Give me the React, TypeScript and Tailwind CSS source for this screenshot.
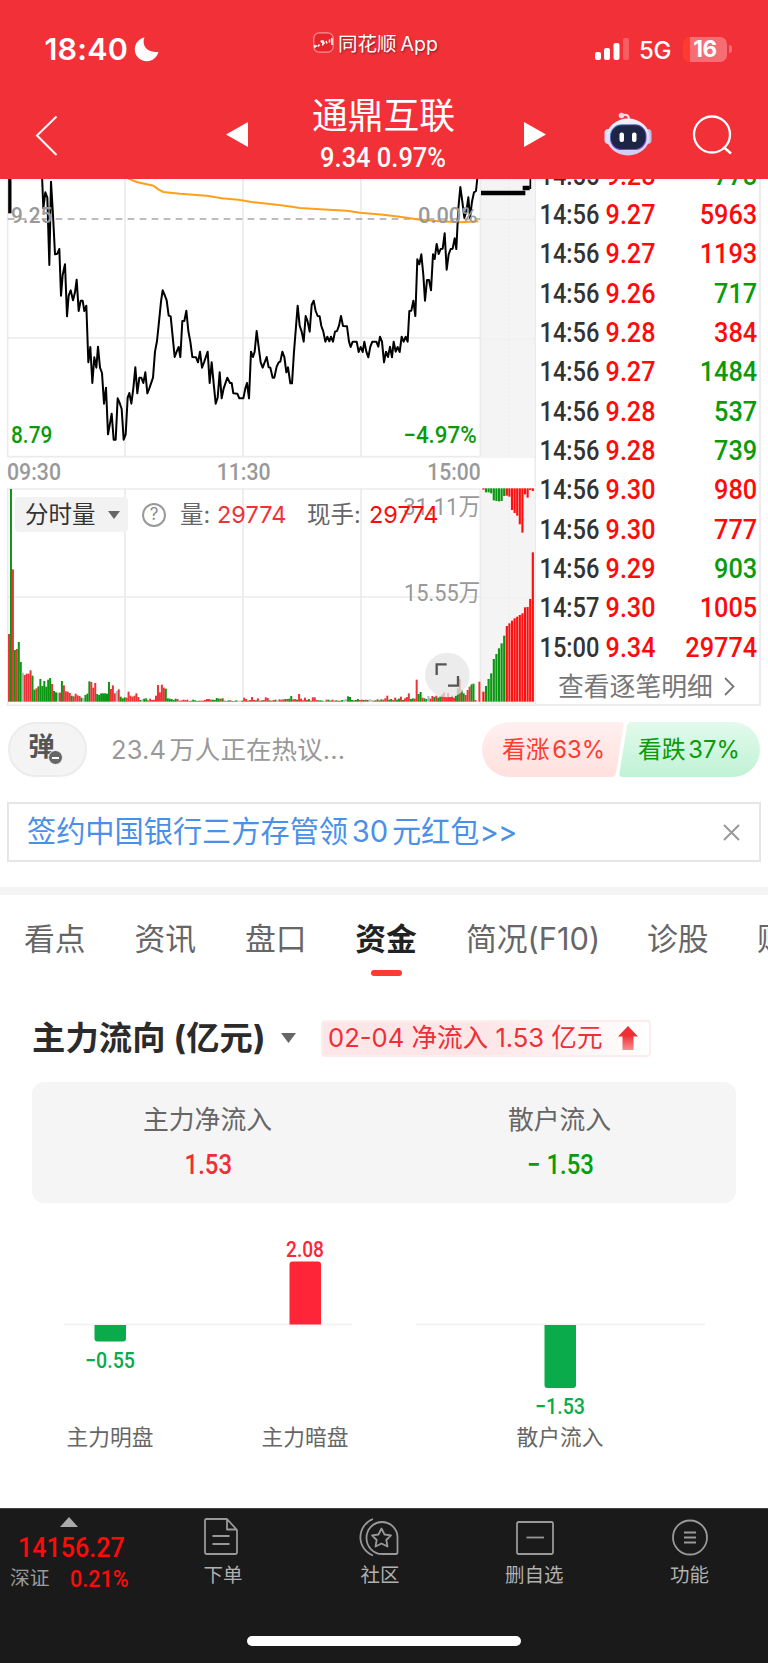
import { ReactNode } from "react";
import clsx from "clsx";

const UI = "font-['Inter','Noto_Sans_CJK_SC',sans-serif]";
const NUM = "font-['Roboto','Noto_Sans_CJK_SC',sans-serif]";

type Tone = "r" | "g" | "x";

const toneFill: Record<Tone, string> = { r: "#ee3238", g: "#0a9610", x: "#b5b5b5" };

// Chart coordinates are in thirds of a pixel
const pricePath =
  "126,0 130,100 136,52 142,68 148,270 153,20 159,120 165,238 172,236 178,222 183,362 188,300 195,268 201,424 206,362 212,346 219,376 225,352 230,314 236,408 242,377 248,377 253,408 259,392 265,562 271,516 277,624 283,547 289,578 294,515 300,578 306,594 312,686 318,638 324,778 330,745 335,716 341,794 347,794 353,670 359,684 365,702 371,794 377,778 383,668 388,654 394,686 400,640 406,577 412,655 418,608 424,608 430,624 436,592 442,655 448,640 459,608 465,530 471,498 477,440 483,380 488,346 494,360 500,376 506,422 512,424 518,485 524,546 530,530 536,516 541,546 547,438 553,438 559,407 565,468 571,500 577,546 588,547 594,562 600,530 606,578 612,562 623,530 629,624 635,562 641,625 647,686 653,668 659,592 665,670 671,640 682,608 690,624 695,624 700,655 712,656 718,670 730,670 736,640 741,624 747,670 753,530 759,546 764,530 770,468 776,516 782,562 788,578 800,546 806,577 811,578 818,608 823,608 830,575 836,562 841,560 847,530 853,546 859,592 864,577 871,625 876,625 882,530 888,455 893,392 899,452 905,470 911,500 917,423 923,440 929,470 935,390 941,377 947,408 953,423 959,424 964,453 970,470 976,500 982,485 988,499 993,485 999,500 1005,470 1011,468 1017,452 1023,423 1029,453 1041,454 1047,500 1052,516 1058,500 1070,500 1076,531 1082,516 1088,531 1093,500 1099,530 1105,547 1111,515 1117,500 1129,500 1135,515 1140,485 1146,500 1152,562 1158,530 1164,546 1170,515 1176,547 1181,500 1187,530 1193,516 1199,531 1205,485 1211,500 1217,485 1223,500 1228,408 1234,407 1240,377 1246,423 1252,253 1258,268 1264,238 1270,300 1275,377 1281,315 1287,315 1293,346 1299,238 1304,252 1310,207 1316,237 1322,222 1328,221 1334,175 1340,284 1346,238 1352,222 1358,221 1364,190 1369,222 1375,100 1381,36 1387,80 1393,128 1399,110 1405,67 1410,128 1416,80 1422,52 1428,48 1433,0";

const avgPath =
  "380,8 388,12 410,21 460,32 475,43 490,51 540,56 620,62 665,70 715,74 755,81 810,87 860,93 900,99 960,103 1040,107 1080,113 1150,119 1210,127 1260,134 1320,139 1380,142 1435,139";

// one bar per minute
const volume =
  "r203 g638 r397 g155 r158 g179 g119 x87 r80 r84 r84 r94 g78 g36 r40 g46 g68 g47 g62 g45 g66 g71 r53 g32 g28 x27 r27 g62 r49 r31 r30 r26 g18 r16 r24 r19 r17 g12 x10 g20 g24 g61 r59 r42 r56 g23 g20 g25 g25 g25 g24 g59 r38 r49 r25 x32 r37 g15 g10 g13 r12 r30 r18 r15 r18 r25 r14 g5 x7 g9 g10 r4 r9 r5 r6 r18 r50 r28 r51 r42 g39 g10 g9 g8 g5 g9 r8 r3 r4 r6 r5 r6 r2 r3 g6 g4 g2 g3 r3 r3 r5 r8 r8 r6 g6 g5 g11 g9 r9 g10 r3 r2 g4 r4 g2 r2 g4 x3 x3 g3 r12 r8 g3 r5 r14 r5 g4 r10 r3 g4 r5 r13 r11 g4 r3 r5 g6 x4 r7 r6 r7 g8 r8 g9 g17 r7 r8 g6 r23 r9 r4 r12 r5 g8 r3 r13 r13 r5 g4 g4 g3 x2 r6 g6 g3 r6 r3 g4 r3 g3 g5 x6 x7 g16 g14 g5 r4 g5 g8 r5 r6 g5 r6 g5 x7 x5 r3 g4 r7 g4 g7 r6 r10 r18 g6 g8 r5 r12 g6 g9 r15 g5 r10 r14 r25 g8 g10 r9 r66 g23 g29 r12 g10 g8 x17 r9 r17 g14 r18 g12 g15 r22 r28 r14 r26 r14 r18 r12 g18 g40 r68 g35 g25 r20 r35 r45 g52 g54 r5 x1 r60"
    .split(" ")
    .map((s) => ({ tone: s[0] as Tone, h: Number(s.slice(1)) }));

const lateVolume = [30, 47, 68, 85, 128, 143, 160, 175, 198, 227, 235, 243, 250, 255, 260, 265, 283, 284, 308, 448];
const lateCancel = [4, 12, 12, 15, 36, 38, 39, 38, 23, 22, 25, 65, 74, 82, 108, 133, 18, 28, 5, 8];

const ticks: [string, string, string, boolean][] = [
  ["14:55", "9.28", "778", false],
  ["14:56", "9.27", "5963", true],
  ["14:56", "9.27", "1193", true],
  ["14:56", "9.26", "717", false],
  ["14:56", "9.28", "384", true],
  ["14:56", "9.27", "1484", false],
  ["14:56", "9.28", "537", false],
  ["14:56", "9.28", "739", false],
  ["14:56", "9.30", "980", true],
  ["14:56", "9.30", "777", true],
  ["14:56", "9.29", "903", false],
  ["14:57", "9.30", "1005", true],
  ["15:00", "9.34", "29774", true],
];

function StatusBar() {
  return (
    <div className="flex h-[94px] items-center">
      <span className="ml-[44.500px] mt-[4px] w-[89.500px] text-[30.500px] font-semibold leading-[36px] tracking-[0.2px]">18:40</span>
      <svg className="mt-[4px] h-[25px] w-[26px]" viewBox="0 0 26 25" fill="#fff">
        <path d="M10.5 0.3C7.5 7.5 12 16.5 24.5 14.8C23 20.5 18.5 24.2 13 24.2C6 24.2 0.8 19 0.8 12.5C0.8 6.5 4.8 1.8 10.5 0.3Z" />
      </svg>
      <svg className="ml-[153px] mt-[-9px] h-[21px] w-[21px]" viewBox="0 0 21 21" fill="none">
        <rect x="0.8" y="0.8" width="19.4" height="19.4" rx="5.5" fill="#e8242b" stroke="#f79296" strokeWidth="1.2" />
        <path d="M1.500 13l.5 2 2-1.500M5 14.500l1.500-2M7.500 9.500l1.500-.5v2M9.500 13.500l1-3.500 .8 2M13 9l1 2.500M16.500 7.500v3M18 6.500l1 .5v6" stroke="#fff" strokeWidth="1.500" />
      </svg>
      <span className="ml-[4px] mt-[-6px] w-[101px] whitespace-nowrap text-[19.5px] leading-[26px] [word-spacing:-1.500px] [text-shadow:1px_1px_2px_rgba(0,0,0,0.45)]">
        同花顺 App
      </span>
      <svg className="ml-[156px] mt-[4px] h-[24px] w-[35px]" viewBox="0 0 35 24" fill="#fff">
        <rect x="0" y="15" width="6" height="8" rx="2" />
        <rect x="9" y="11" width="6" height="12" rx="2" />
        <rect x="18.500" y="6" width="6" height="17" rx="2" />
        <rect x="28" y="1" width="6" height="22" rx="2" opacity="0.22" />
      </svg>
      <span className="ml-[9px] mt-[7px] w-[35px] text-[24px] font-medium leading-[28px] tracking-[-0.3px]">5G</span>
      <div className="ml-[9px] mt-[4px] flex h-[25px] w-[44px] shrink-0 items-center justify-center rounded-[7px] bg-linear-to-r from-[#ff3b30] from-[16%] to-[#f66e73] to-[16%] text-[22.500px] font-bold tracking-[-0.3px]">
        16
      </div>
      <div className="ml-[2px] mt-[4px] h-[8px] w-[2.5px] rounded-r-full bg-[#f66e73]" />
    </div>
  );
}

function Robot() {
  return (
    <svg className="h-[44px] w-[48px]" viewBox="0 0 48 44" fill="none">
      <defs>
        <linearGradient id="shell" x1="0" y1="0" x2="0" y2="1">
          <stop offset="0" stopColor="#f4f3fb" />
          <stop offset="1" stopColor="#cfcdf0" />
        </linearGradient>
        <linearGradient id="visor" x1="0" y1="0" x2="1" y2="1">
          <stop offset="0" stopColor="#4a9fc0" />
          <stop offset="0.500" stopColor="#5a3fc0" />
          <stop offset="1" stopColor="#8a5ce0" />
        </linearGradient>
      </defs>
      <path d="M18 3.500c4-1.500 7-.5 7 4" stroke="#e3e1f5" strokeWidth="2" />
      <circle cx="17.500" cy="3.500" r="2.800" fill="#f0d8e4" />
      <rect x="0.500" y="17" width="8" height="15" rx="4" fill="#dcd9f5" />
      <rect x="39.500" y="17" width="8" height="15" rx="4" fill="#c3c0ea" />
      <ellipse cx="24" cy="25" rx="21.500" ry="18.500" fill="url(#shell)" />
      <rect x="6" y="12.300" width="36.500" height="25.700" rx="11.500" fill="url(#visor)" />
      <rect x="6.900" y="13.200" width="34.700" height="23.800" rx="11" fill="#1d2547" />
      <rect x="15.500" y="20.500" width="4.500" height="9.500" rx="2" fill="#fff" />
      <rect x="28" y="20.500" width="4.500" height="9.500" rx="2" fill="#fff" />
    </svg>
  );
}

function Header() {
  return (
    <header className="h-[179px] shrink-0 bg-[#f23038] text-white">
      <StatusBar />
      <div className="flex h-[85px] items-start">
        <svg className="ml-[35px] mt-[21px] h-[41px] w-[23px]" viewBox="0 0 23 41" fill="none" stroke="#fff" strokeWidth="2">
          <path d="M21.500 1.500L2 20.500L21.500 40" />
        </svg>
        <svg className="ml-[168px] mt-[28px] h-[25px] w-[22px]" viewBox="0 0 22 25" fill="#fff">
          <path d="M0 12.500L22 0V25Z" />
        </svg>
        <div className="ml-[47.500px] flex w-[176px] flex-col items-center">
          <h1 className="mt-[1px] whitespace-nowrap text-[35.800px] leading-[42px]">通鼎互联</h1>
          <p className={clsx(NUM, "scale-x-[0.925] whitespace-nowrap text-[27.500px] font-medium leading-[41px]")}>9.34 0.97%</p>
        </div>
        <svg className="ml-[52px] mt-[28px] h-[25px] w-[22px]" viewBox="0 0 22 25" fill="#fff">
          <path d="M22 12.500L0 0V25Z" />
        </svg>
        <div className="ml-[58px] mt-[18px]">
          <Robot />
        </div>
        <svg className="ml-[40px] mt-[20px] h-[42px] w-[42px]" viewBox="0 0 42 42" fill="none" stroke="#fff" strokeWidth="2.300">
          <circle cx="20" cy="20.500" r="18" />
          <path d="M31.500 33L39 39.500" strokeWidth="2.500" />
        </svg>
      </div>
    </header>
  );
}

function PriceChart() {
  return (
    <svg className={clsx(NUM, "block h-[308px] w-[536px]")} viewBox="0 12 1608 924" fontWeight="500">
      <rect x="1443" y="12" width="162" height="837" fill="#f4f4f4" />
      <g stroke="#ebebeb" strokeWidth="5">
        <path d="M23 12V845H1441M375 12V845M729 12V845M1083 12V845M1441 12V845M23 489H1441" fill="none" />
        <path d="M1441 133H1605" strokeWidth="3" />
        <path d="M1526 12V845M1441 493H1605" strokeWidth="3" strokeDasharray="6 6" />
        <path d="M1606 12V936" />
      </g>
      <path d="M23 132H1441" stroke="#a6a6a6" strokeWidth="5" strokeDasharray="20 16" />
      <polyline points={avgPath} fill="none" stroke="#ff9f1c" strokeWidth="6" />
      <path d="M29.500 12V115" stroke="#000" strokeWidth="10" />
      <polyline points={pricePath} fill="none" stroke="#000" strokeWidth="6" strokeLinejoin="round" />
      <path d="M1443 54H1576M1568 39H1589" stroke="#000" strokeWidth="14" />
      <path d="M1591 12V42" stroke="#000" strokeWidth="5" />
      <g fill="#999">
        <text x="33" y="144" fontSize="68" textLength="124" lengthAdjust="spacingAndGlyphs">9.25</text>
        <text x="1254" y="144" fontSize="68" textLength="178" lengthAdjust="spacingAndGlyphs">0.00%</text>
        <text x="21" y="914" fontSize="70" textLength="162" lengthAdjust="spacingAndGlyphs">09:30</text>
        <text x="650" y="914" fontSize="70" textLength="162" lengthAdjust="spacingAndGlyphs">11:30</text>
        <text x="1282" y="914" fontSize="70" textLength="160" lengthAdjust="spacingAndGlyphs">15:00</text>
      </g>
      <g fill="#0a9b0a">
        <text x="33" y="803" fontSize="70" textLength="124" lengthAdjust="spacingAndGlyphs">8.79</text>
        <text x="1210" y="803" fontSize="70" textLength="220" lengthAdjust="spacingAndGlyphs">−4.97%</text>
      </g>
    </svg>
  );
}

function VolumeChart() {
  return (
    <div className="relative mt-[1px] h-[218px] w-[536px]">
      <svg className={clsx(NUM, "block h-[218px] w-[536px]")} viewBox="0 24 1608 654">
        <rect x="1443" y="24" width="162" height="650" fill="#f4f4f4" />
        <g stroke="#ebebeb" strokeWidth="5" fill="none">
          <path d="M23 676V27H1441M375 27V676M729 27V676M1083 27V676M1441 27V676M23 351H1441M20 676H1608" />
          <path d="M1526 27V665M1441 353H1605" strokeWidth="3" strokeDasharray="6 6" />
          <path d="M1606 24V676" />
        </g>
        {volume.map((v, i) => (
          <rect key={i} x={24 + i * 5.88} y={665 - v.h} width="6" height={v.h} fill={toneFill[v.tone]} />
        ))}
        {lateVolume.map((h, i) => (
          <rect key={i} x={1447 + i * 7.8} y={665 - h} width="6.500" height={h} fill={i > 0 && i < 9 ? "#0a9610" : "#ff0f0f"} />
        ))}
        {lateCancel.map((h, i) => (
          <rect key={i} x={1447 + i * 7.8} y="25" width="6.500" height={h} fill={i > 0 && i < 9 ? "#0a9610" : "#ff0f0f"} />
        ))}
        <g fill="#999" fontSize="70">
          <text x="1210" y="104" textLength="231" lengthAdjust="spacingAndGlyphs">31.11万</text>
          <text x="1212" y="364" textLength="229" lengthAdjust="spacingAndGlyphs">15.55万</text>
        </g>
        <circle cx="1342" cy="585" r="67" fill="#e6e6e6" opacity="0.750" />
        <path d="M1310 585V553H1340M1374 588V617H1344" fill="none" stroke="#555" strokeWidth="7" />
      </svg>
      <div className="absolute left-[15px] top-[9px] flex h-[35px] items-center whitespace-nowrap text-[23.500px] text-[#666]">
        <div className="flex h-[35px] w-[113px] items-center rounded-[4px] bg-[#f2f2f2] pl-[10px] text-[#333]">
          分时量
          <svg className="ml-[12px] h-[8px] w-[12px]" viewBox="0 0 12 8" fill="#666">
            <path d="M0 0H12L6 8Z" />
          </svg>
        </div>
        <div className="ml-[14px] flex h-[24px] w-[24px] items-center justify-center rounded-full border-2 border-[#999] text-[17px] text-[#888]">?</div>
        <span className="ml-[14px] w-[37px]">量:</span>
        <span className="w-[90px] text-[#ee3238]">29774</span>
        <span className="w-[62px]">现手:</span>
        <span className="text-[#ff0a0a]">29774</span>
      </div>
    </div>
  );
}

function TickList() {
  return (
    <div className="flex h-[527px] w-[225px] flex-col overflow-hidden border-b-2 border-r-2 border-[#ededed]">
      <div className={clsx(NUM, "mt-[-23.500px] text-[27.500px] font-medium")}>
        {ticks.map(([time, price, vol, up], i) => (
          <div key={i} className="flex h-[39.350px] items-center">
            <span className="w-[65px] origin-left scale-x-[0.860] pl-[4px] text-[#333]">{time}</span>
            <span className="w-[60px] origin-left scale-x-[0.915] pl-[5px] text-[#ff0a0a]">{price}</span>
            <span className={clsx("flex-1 origin-right scale-x-[0.920] pr-[2px] text-right", up ? "text-[#ff0a0a]" : "text-[#0a9b0a]")}>{vol}</span>
          </div>
        ))}
      </div>
      <div className="flex items-center pl-[22px] text-[25.800px] leading-[40px] text-[#777]">
        查看逐笔明细
        <svg className="ml-[11px] h-[19px] w-[11px]" viewBox="0 0 11 19" fill="none" stroke="#777" strokeWidth="1.800">
          <path d="M1 1L9.500 9.500L1 18" />
        </svg>
      </div>
    </div>
  );
}

function Discussion() {
  return (
    <div className="flex h-[96px] items-start pl-[8px] pt-[16px]">
      <div className="relative flex h-[55px] w-[79px] items-center justify-center rounded-full border-2 border-[#ececec] bg-[#f4f4f4] pb-[5px] pr-[12px] text-[26.500px] font-bold text-[#555]">
        弹
        <span className="absolute left-[38px] top-[26px] flex h-[15px] w-[15px] items-center justify-center rounded-full border border-[#f4f4f4] bg-[#666]">
          <span className="h-[2px] w-[7px] bg-white" />
        </span>
      </div>
      <p className="ml-[24px] w-[371px] whitespace-nowrap text-[25.500px] leading-[55px] tracking-[0.100px] text-[#999] [word-spacing:-4px]">23.4 万人正在热议...</p>
      <div className="relative flex h-[55px] w-[278px] text-[23.800px] leading-[55px]">
        <svg className="absolute inset-0 h-[55px] w-[278px]" viewBox="0 0 278 55">
          <defs>
            <linearGradient id="bull" x1="0" y1="0" x2="0" y2="1">
              <stop offset="0" stopColor="#fff0ef" />
              <stop offset="1" stopColor="#ffe0de" />
            </linearGradient>
            <linearGradient id="bear" x1="0" y1="0" x2="0" y2="1">
              <stop offset="0" stopColor="#e2faec" />
              <stop offset="1" stopColor="#c0f2d5" />
            </linearGradient>
          </defs>
          <path d="M27.500 0H139Q142 0 141.500 3L134 51Q133 55 130 55H27.500A27.500 27.500 0 0 1 27.500 0Z" fill="url(#bull)" />
          <path d="M149 0H250.500A27.500 27.500 0 0 1 250.500 55H140Q137 55 137.500 51L145 4Q146 0 149 0Z" fill="url(#bear)" />
        </svg>
        <span className="relative w-[136px] whitespace-nowrap pl-[20px] text-[#ff3b30] [word-spacing:-4px]">看涨 63%</span>
        <span className="relative whitespace-nowrap pl-[20px] text-[#0a9b0a] [word-spacing:-4px]">看跌 37%</span>
      </div>
    </div>
  );
}

function Promo() {
  return (
    <div className="mx-[7px] flex h-[60px] items-center justify-between border-2 border-[#e6e6e6] pl-[18px] pr-[19px]">
      <a className="whitespace-nowrap text-[29.200px] leading-[56px] text-[#4a90e8] [word-spacing:-4.500px]">
        签约中国银行三方存管领 30 元红包<span className="tracking-[-0.800px]">&gt;&gt;</span>
      </a>
      <svg className="h-[17px] w-[17px]" viewBox="0 0 17 17" stroke="#999" strokeWidth="2">
        <path d="M1 1L16 16M16 1L1 16" />
      </svg>
    </div>
  );
}

function Tabs() {
  return (
    <nav className="flex h-[95px] overflow-hidden whitespace-nowrap pl-[24px] text-[30.800px] leading-[88px] text-[#666]">
      <span className="w-[110.500px] shrink-0">看点</span>
      <span className="w-[110.500px] shrink-0">资讯</span>
      <span className="w-[110px] shrink-0">盘口</span>
      <div className="flex w-[62px] shrink-0 flex-col items-center font-bold text-[#222]">
        资金
        <span className="mt-[-13px] h-[6px] w-[31px] rounded-[3px] bg-[#ff3b30]" />
      </div>
      <span className="ml-[49px] w-[181px] shrink-0">简况(F10)</span>
      <span className="w-[110px] shrink-0">诊股</span>
      <span className="shrink-0">财</span>
    </nav>
  );
}

function FlowColumn({ label, children }: { label: string; children: ReactNode }) {
  return (
    <div className="flex flex-1 flex-col items-center">
      <span className="ml-[-1px] text-[25.800px] leading-[36px] text-[#666]">{label}</span>
      {children}
    </div>
  );
}

function FundFlow() {
  return (
    <section className="h-[518px] px-[32px] pt-[27px]">
      <div className="flex h-[42px] items-center">
        <h2 className="w-[249px] whitespace-nowrap text-[33.300px] font-bold leading-[42px] tracking-[0.100px] text-[#2b2b2b]">
          主力流向 (亿元)
        </h2>
        <svg className="h-[10px] w-[15px]" viewBox="0 0 15 10" fill="#666">
          <path d="M0 0H15L7.500 10Z" />
        </svg>
        <div className="ml-[25px] flex h-[37px] w-[330px] items-center rounded-[4px] border-2 border-[#fdeeee] bg-linear-to-r from-[#fde6e7] from-50% to-white pl-[5px] text-[#ee2f35]">
          <span className="w-[290px] whitespace-nowrap text-[25.600px] leading-[34px]">02-04 净流入 1.53 亿元</span>
          <svg className="h-[24px] w-[20px]" viewBox="0 0 20 24">
            <defs>
              <linearGradient id="up" x1="0" y1="0" x2="0" y2="1">
                <stop offset="0.400" stopColor="#ee3035" />
                <stop offset="1" stopColor="#f78d90" />
              </linearGradient>
            </defs>
            <path d="M10 0L20 10.500H15.500V24H4.500V10.500H0Z" fill="url(#up)" />
          </svg>
        </div>
      </div>
      <div className="mt-[23px] flex h-[121px] rounded-[12px] bg-[#f5f5f5] pt-[20px]">
        <FlowColumn label="主力净流入">
          <span className={clsx(NUM, "mt-[9px] scale-x-[0.870] text-[27.500px] font-medium leading-[36px] text-[#ee2f35]")}>1.53</span>
        </FlowColumn>
        <FlowColumn label="散户流入">
          <span className={clsx(NUM, "mt-[9px] scale-x-[0.870] text-[27.500px] font-medium leading-[36px] text-[#0a9b0a]")}>− 1.53</span>
        </FlowColumn>
      </div>
      <svg className={clsx(UI, "ml-[-32px] block h-[260px] w-[768px]")} viewBox="0 1203 768 260" textAnchor="middle">
        <path d="M64 1324.500H352M416 1324.500H705" stroke="#f3f3f3" strokeWidth="2" />
        <path d="M289.500 1324.500V1264.500Q289.500 1261.500 292.500 1261.500H318Q321 1261.500 321 1264.500V1324.500Z" fill="#ff2538" />
        <path d="M94.500 1325H126V1338.500Q126 1341.500 123 1341.500H97.500Q94.500 1341.500 94.500 1338.500Z" fill="#09ab4b" />
        <path d="M544.500 1325H576V1385Q576 1388 573 1388H547.500Q544.500 1388 544.500 1385Z" fill="#09ab4b" />
        <g className={NUM} fontSize="22" fontWeight="500">
          <text x="305" y="1256.500" fill="#ff2538" textLength="38" lengthAdjust="spacingAndGlyphs">2.08</text>
          <text x="110" y="1368" fill="#09ab4b" textLength="50" lengthAdjust="spacingAndGlyphs">−0.55</text>
          <text x="560" y="1414" fill="#09ab4b" textLength="50" lengthAdjust="spacingAndGlyphs">−1.53</text>
        </g>
        <g fontSize="21.700" fill="#666">
          <text x="110" y="1445">主力明盘</text>
          <text x="305" y="1445">主力暗盘</text>
          <text x="560" y="1445">散户流入</text>
        </g>
      </svg>
    </section>
  );
}

function NavItem({ label, children }: { label: string; children: ReactNode }) {
  return (
    <div className="flex flex-col items-center text-[19.500px] leading-[30px] text-[#b0b0b0]">
      <svg className="mb-[3px] h-[40px] w-[44px]" viewBox="0 0 44 40" fill="none" stroke="#999" strokeWidth="1.800" strokeLinejoin="round">
        {children}
      </svg>
      {label}
    </div>
  );
}

function BottomBar() {
  return (
    <footer className="flex h-[155px] flex-col items-center border-t border-[#444] bg-[#1a1a1a]">
      <div className="flex w-full pt-[8px]">
        <div className={clsx(NUM, "w-[138px] shrink-0 font-medium text-[#ff0a0a]")}>
          <svg className="ml-[60px] h-[10px] w-[18px]" viewBox="0 0 18 10" fill="#aaa">
            <path d="M9 0L18 10H0Z" />
          </svg>
          <div className="ml-[18px] mt-[4px] w-fit origin-left scale-x-[0.880] text-[28.500px] leading-[34px]">14156.27</div>
          <div className="mt-[-1px] flex items-center leading-[30px]">
            <span className="ml-[10px] w-[60px] text-[19.800px] font-normal text-[#999]">深证</span>
            <span className="origin-left scale-x-[0.880] text-[24.500px]">0.21%</span>
          </div>
        </div>
        <div className="ml-[63px]">
          <NavItem label="下单">
            <path d="M26 2H5.500Q4 2 4 3.500V35.500Q4 37 5.500 37H34.500Q36 37 36 35.500V13L26 2V12.500H36M11.500 19H28.500M11.500 27H28.500" />
          </NavItem>
        </div>
        <div className="ml-[113px]">
          <NavItem label="社区">
            <path d="M24 5A15.500 16 0 1 0 24 37H38Q39.500 37 39.500 35V20A15.500 15.500 0 0 0 24 5Z" />
            <path d="M15 2A19.500 19.500 0 0 0 15 38.500" />
            <path d="M23.500 11.500L26.500 17.500L33 18.300L28.300 23L29.500 29.500L23.500 26.500L17.500 29.500L18.700 23L14 18.300L20.500 17.500Z" />
          </NavItem>
        </div>
        <div className="ml-[103px]">
          <NavItem label="删自选">
            <rect x="5" y="5" width="36" height="32" rx="1.500" />
            <path d="M14.500 20.500H32" />
          </NavItem>
        </div>
        <div className="ml-[104px]">
          <NavItem label="功能">
            <circle cx="22" cy="20.500" r="17" />
            <path d="M16 15.500H28M16 20.500H28M16 25.500H28" />
          </NavItem>
        </div>
      </div>
      <div className="mb-[17px] mt-auto h-[10px] w-[274px] rounded-full bg-white" />
    </footer>
  );
}

export default function App() {
  return (
    <div className={clsx(UI, "flex h-[1663px] w-[768px] flex-col overflow-hidden bg-white")}>
      <Header />
      <div className="flex h-[527px] shrink-0">
        <div className="flex flex-col">
          <PriceChart />
          <VolumeChart />
        </div>
        <TickList />
      </div>
      <Discussion />
      <Promo />
      <div className="mt-[25px] h-[8px] shrink-0 bg-[#f4f4f4]" />
      <Tabs />
      <FundFlow />
      <BottomBar />
    </div>
  );
}
